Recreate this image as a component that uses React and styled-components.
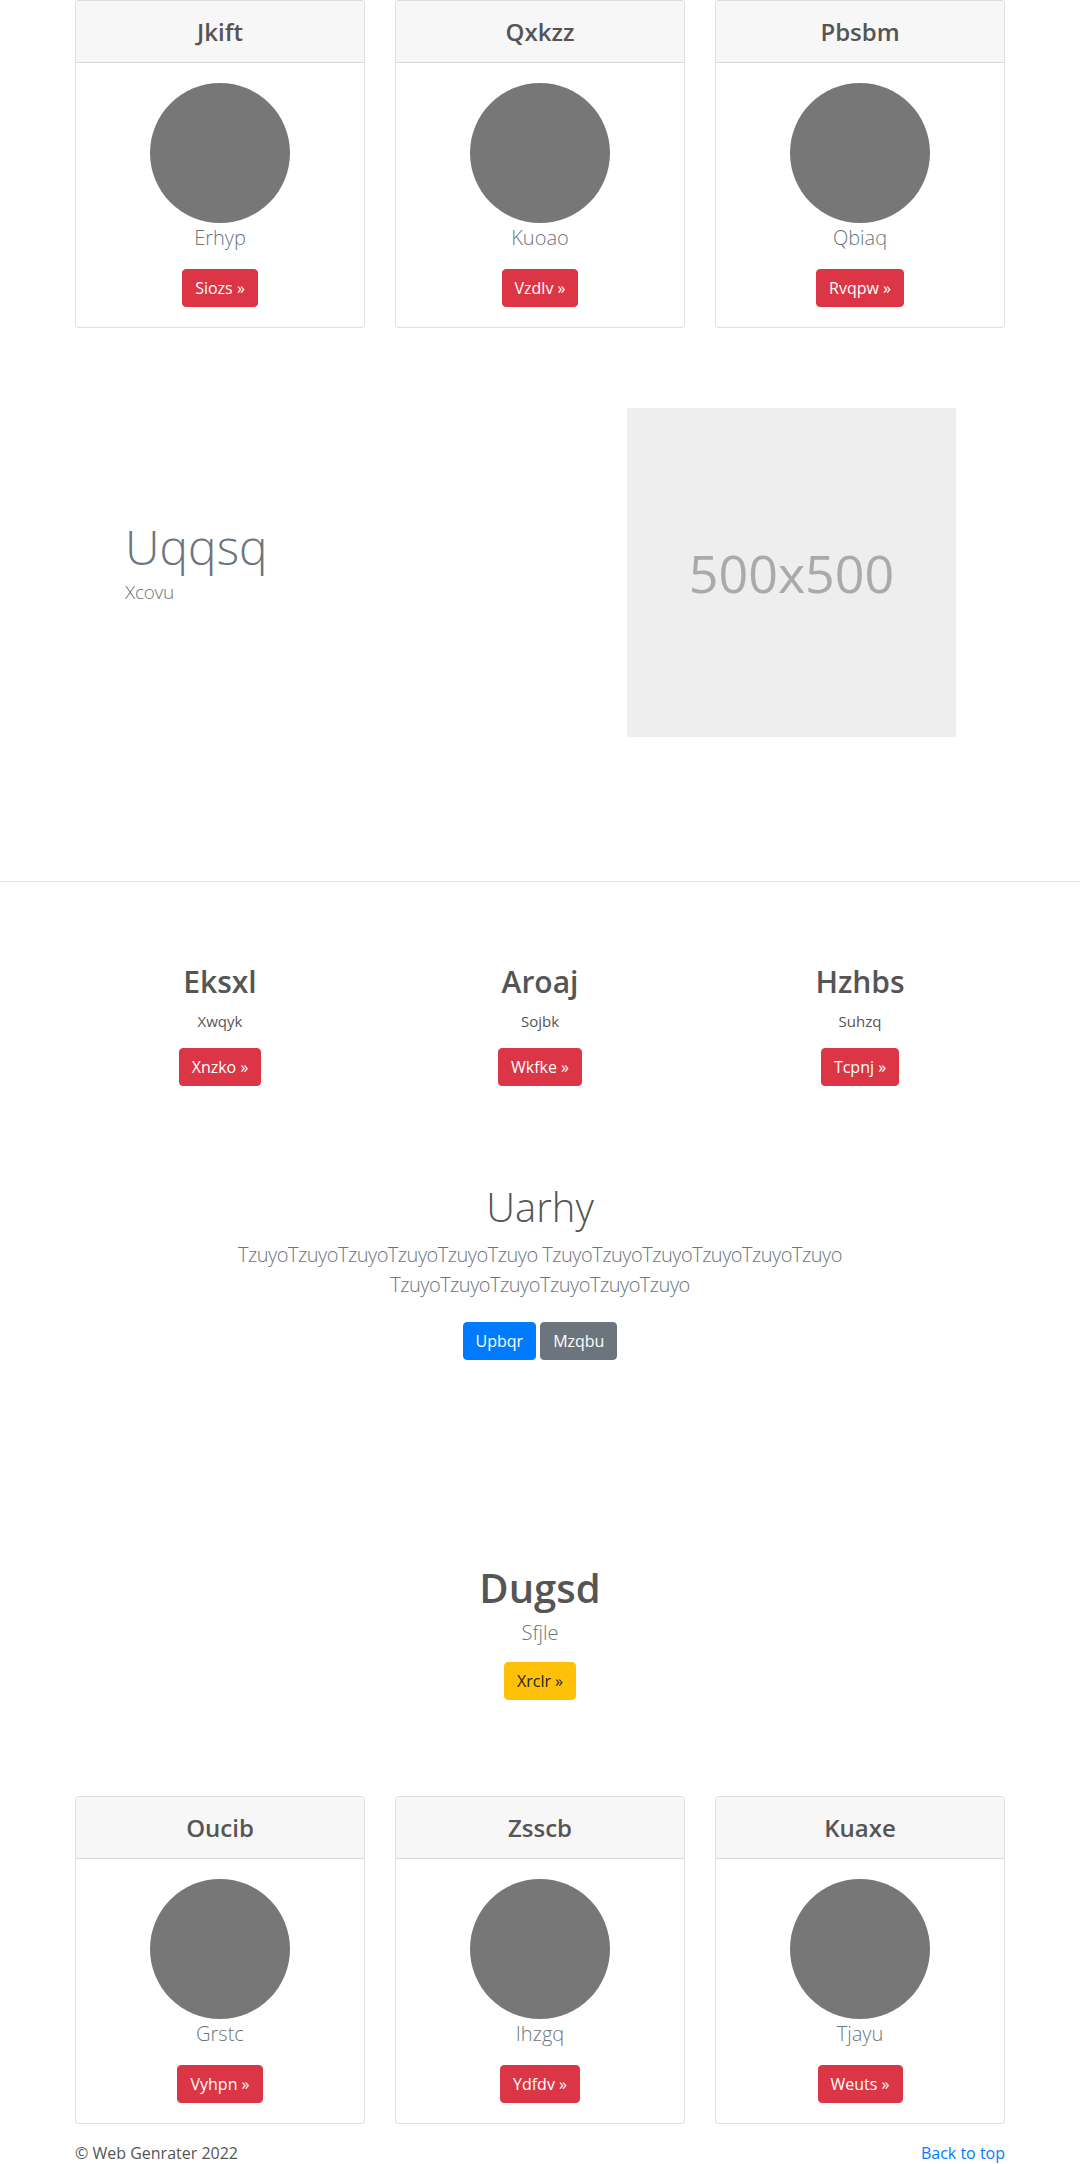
import styled, { createGlobalStyle } from "styled-components"

const GlobalStyle = createGlobalStyle`
    body{
        margin: 0;
        background: #ffffff;
        font-family: "Segoe UI", "Open Sans", "Noto Sans", sans-serif;
        color: #555555;
    }
    *{
        box-sizing: border-box;
    }
`

const topCards = [
    { title: "Jkift", text: "Erhyp", button: "Siozs" },
    { title: "Qxkzz", text: "Kuoao", button: "Vzdlv" },
    { title: "Pbsbm", text: "Qbiaq", button: "Rvqpw" },
]

const bottomCards = [
    { title: "Oucib", text: "Grstc", button: "Vyhpn" },
    { title: "Zsscb", text: "Ihzgq", button: "Ydfdv" },
    { title: "Kuaxe", text: "Tjayu", button: "Weuts" },
]

const features = [
    { title: "Eksxl", text: "Xwqyk", button: "Xnzko" },
    { title: "Aroaj", text: "Sojbk", button: "Wkfke" },
    { title: "Hzhbs", text: "Suhzq", button: "Tcpnj" },
]

function CardGrid({ items }){
    return(
        <CardRow>
            {items.map((item) => (
                <Card key={item.title}>
                    <CardHeader>
                        <h4>{item.title}</h4>
                    </CardHeader>
                    <CardBody>
                        <Avatar />
                        <CardText>{item.text}</CardText>
                        <Button variant="danger">{item.button} »</Button>
                    </CardBody>
                </Card>
            ))}
        </CardRow>
    )
}

export default function App(){
    return(
        <>
            <GlobalStyle />
            <Container>
                <CardGrid items={topCards} />
                <Showcase>
                    <ShowcaseText>
                        <h1>Uqqsq</h1>
                        <p>Xcovu</p>
                    </ShowcaseText>
                    <Placeholder>500x500</Placeholder>
                </Showcase>
            </Container>
            <Divider />
            <Container>
                <FeatureRow>
                    {features.map((f) => (
                        <Feature key={f.title}>
                            <h2>{f.title}</h2>
                            <p>{f.text}</p>
                            <Button variant="danger">{f.button} »</Button>
                        </Feature>
                    ))}
                </FeatureRow>
                <Hero>
                    <h1>Uarhy</h1>
                    <p>TzuyoTzuyoTzuyoTzuyoTzuyoTzuyo TzuyoTzuyoTzuyoTzuyoTzuyoTzuyo TzuyoTzuyoTzuyoTzuyoTzuyoTzuyo</p>
                    <ButtonGroup>
                        <Button variant="primary">Upbqr</Button>
                        <Button variant="secondary">Mzqbu</Button>
                    </ButtonGroup>
                </Hero>
                <CallOut>
                    <h1>Dugsd</h1>
                    <p>Sfjle</p>
                    <Button variant="warning">Xrclr »</Button>
                </CallOut>
                <CardGrid items={bottomCards} />
                <Footer>
                    <span>© Web Genrater 2022</span>
                    <a href="#">Back to top</a>
                </Footer>
            </Container>
        </>
    )
}

const variants = {
    danger: { bg: "#dc3545", fg: "#ffffff" },
    primary: { bg: "#007bff", fg: "#ffffff" },
    secondary: { bg: "#6c757d", fg: "#ffffff" },
    warning: { bg: "#ffc107", fg: "#212529" },
}

const Container = styled.div`
    width: 930px;
    margin: 0 auto;
`

const CardRow = styled.div`
    display: grid;
    grid-template-columns: repeat(3, 290px);
    column-gap: 30px;
`

const Card = styled.div`
    border: 1px solid rgba(0,0,0,.125);
    border-radius: 4px;
    overflow: hidden;
    background: white;
`

const CardHeader = styled.div`
    background: #f7f7f7;
    border-bottom: 1px solid rgba(0,0,0,.125);
    padding: 16px 20px;
    text-align: center;
    h4{
        margin: 0;
        font-size: 24px;
        line-height: 29px;
        font-weight: 600;
        color: #555555;
    }
`

const CardBody = styled.div`
    display: flex;
    flex-direction: column;
    align-items: center;
    padding: 20px;
`

const Avatar = styled.div`
    width: 140px;
    height: 140px;
    border-radius: 50%;
    background: #777777;
`

const CardText = styled.p`
    margin: 0 0 16px;
    font-size: 20px;
    line-height: 30px;
    font-weight: 300;
    color: #6c757d;
`

const Button = styled.a`
    display: inline-block;
    padding: 6px 12px;
    font-size: 16px;
    line-height: 24px;
    border-radius: 4px;
    border: 1px solid ${(p) => variants[p.variant].bg};
    background: ${(p) => variants[p.variant].bg};
    color: ${(p) => variants[p.variant].fg};
    text-decoration: none;
    cursor: pointer;
`

const Showcase = styled.section`
    display: flex;
    justify-content: space-between;
    align-items: center;
    padding: 80px 49px 144px 50px;
`

const ShowcaseText = styled.div`
    padding-bottom: 24px;
    h1{
        margin: 0;
        font-size: 48px;
        line-height: 62px;
        font-weight: 300;
        color: #6c757d;
    }
    p{
        margin: 0;
        font-size: 19px;
        line-height: 28px;
        font-weight: 300;
        letter-spacing: -0.3px;
        color: #6c757d;
    }
`

const Placeholder = styled.div`
    width: 329px;
    height: 329px;
    background: #eeeeee;
    color: #aaaaaa;
    font-size: 52px;
    display: flex;
    align-items: center;
    justify-content: center;
`

const Divider = styled.hr`
    margin: 0;
    border: 0;
    border-top: 1px solid #e5e5e5;
`

const FeatureRow = styled.section`
    display: grid;
    grid-template-columns: repeat(3, 1fr);
    column-gap: 30px;
    padding-top: 82px;
`

const Feature = styled.div`
    text-align: center;
    h2{
        margin: 0 0 10px;
        font-size: 30px;
        line-height: 36px;
        font-weight: 600;
        color: #555555;
    }
    p{
        margin: 0 0 16px;
        font-size: 15px;
        line-height: 22px;
        color: #555555;
    }
`

const Hero = styled.section`
    text-align: center;
    padding-top: 97px;
    h1{
        margin: 0 0 9px;
        font-size: 40px;
        line-height: 48px;
        font-weight: 300;
        color: #555555;
    }
    p{
        max-width: 720px;
        margin: 0 auto 22px;
        font-size: 20px;
        line-height: 30px;
        font-weight: 300;
        letter-spacing: -0.5px;
        color: #6c757d;
    }
`

const ButtonGroup = styled.div`
    display: flex;
    justify-content: center;
    gap: 4px;
`

const CallOut = styled.section`
    text-align: center;
    padding: 204px 0 96px;
    h1{
        margin: 0 0 6px;
        font-size: 40px;
        line-height: 48px;
        font-weight: 600;
        color: #555555;
    }
    p{
        margin: 0 0 14px;
        font-size: 20px;
        line-height: 30px;
        font-weight: 300;
        color: #6c757d;
    }
`

const Footer = styled.footer`
    display: flex;
    justify-content: space-between;
    margin-top: 17px;
    font-size: 16px;
    line-height: 24px;
    color: #555555;
    a{
        color: #007bff;
        text-decoration: none;
    }
`
